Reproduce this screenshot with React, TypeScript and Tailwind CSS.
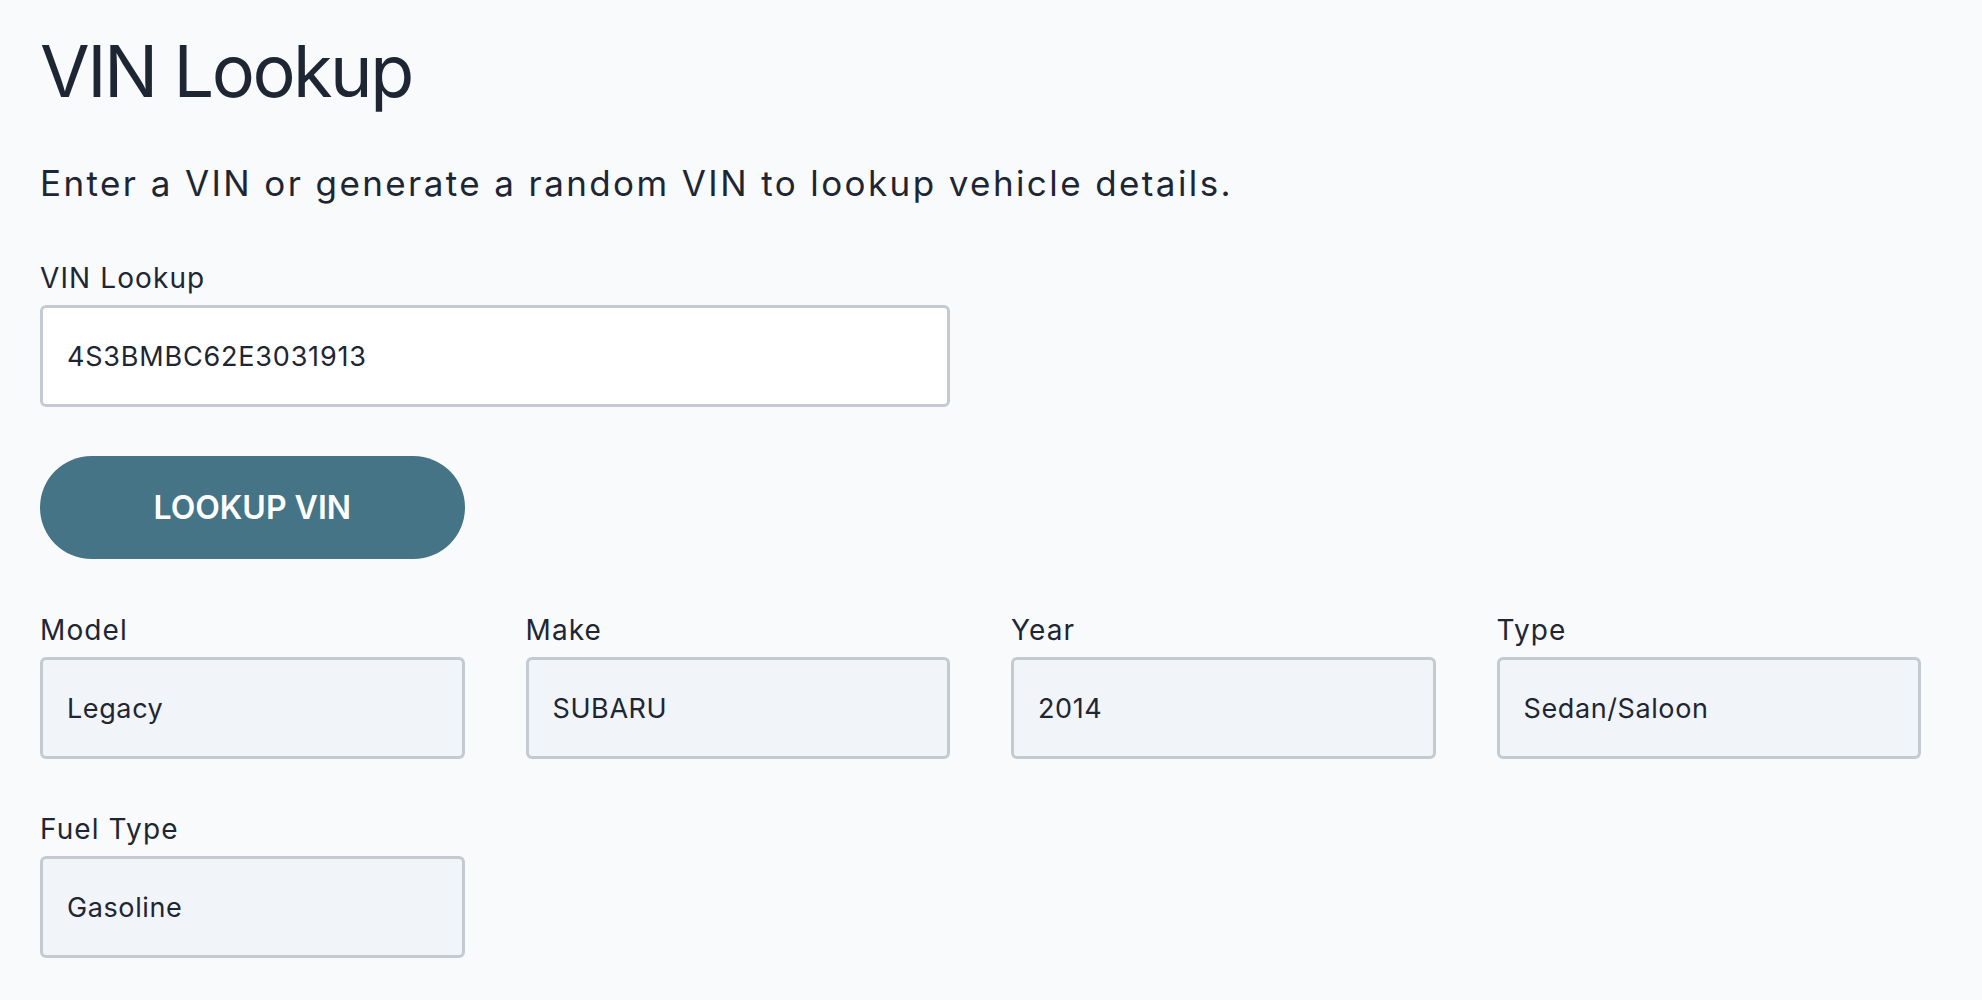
import { useState } from "react";

type VehicleField = {
  label: string;
  value: string;
};

const vehicleFields: VehicleField[] = [
  { label: "Model", value: "Legacy" },
  { label: "Make", value: "SUBARU" },
  { label: "Year", value: "2014" },
  { label: "Type", value: "Sedan/Saloon" },
  { label: "Fuel Type", value: "Gasoline" },
];

export default function App() {
  const [vin, setVin] = useState("4S3BMBC62E3031913");

  return (
    <main className="min-h-screen bg-[#f8fafc] pl-[40px] pt-[35px] font-[Inter,sans-serif] text-[#1e2633]">
      <h1 className="text-[72px] leading-none font-normal tracking-[-2.5px]">VIN Lookup</h1>

      <p className="mt-[59px] text-[35px] leading-none tracking-[2.4px]">
        Enter a VIN or generate a random VIN to lookup vehicle details.
      </p>

      <div className="mt-[63px] grid grid-cols-4">
        <div className="col-span-2 flex flex-col gap-[13px] pr-[61px]">
          <label className="text-[28px] leading-none tracking-[1.1px]">VIN Lookup</label>
          <input
            value={vin}
            onChange={(e) => setVin(e.target.value)}
            className="h-[102px] rounded-[6px] border-[3px] border-[#c3cad1] bg-white px-[24px] text-[27px] tracking-[0.8px] outline-none"
          />
        </div>
      </div>

      <div className="mt-[49px] grid grid-cols-4">
        <div className="pr-[61px]">
          <button className="h-[103px] w-full rounded-full bg-[#467487] text-[32px] font-semibold text-white">
            LOOKUP VIN
          </button>
        </div>
      </div>

      <div className="mt-[57px] grid grid-cols-4 gap-y-[56px]">
        {vehicleFields.map((field) => (
          <div key={field.label} className="flex flex-col gap-[13px] pr-[61px]">
            <label className="text-[28px] leading-none tracking-[1.1px]">{field.label}</label>
            <input
              readOnly
              value={field.value}
              className="h-[102px] rounded-[6px] border-[3px] border-[#c3cad1] bg-[#f1f4f8] px-[24px] text-[27px] tracking-[0.6px] outline-none"
            />
          </div>
        ))}
      </div>
    </main>
  );
}
